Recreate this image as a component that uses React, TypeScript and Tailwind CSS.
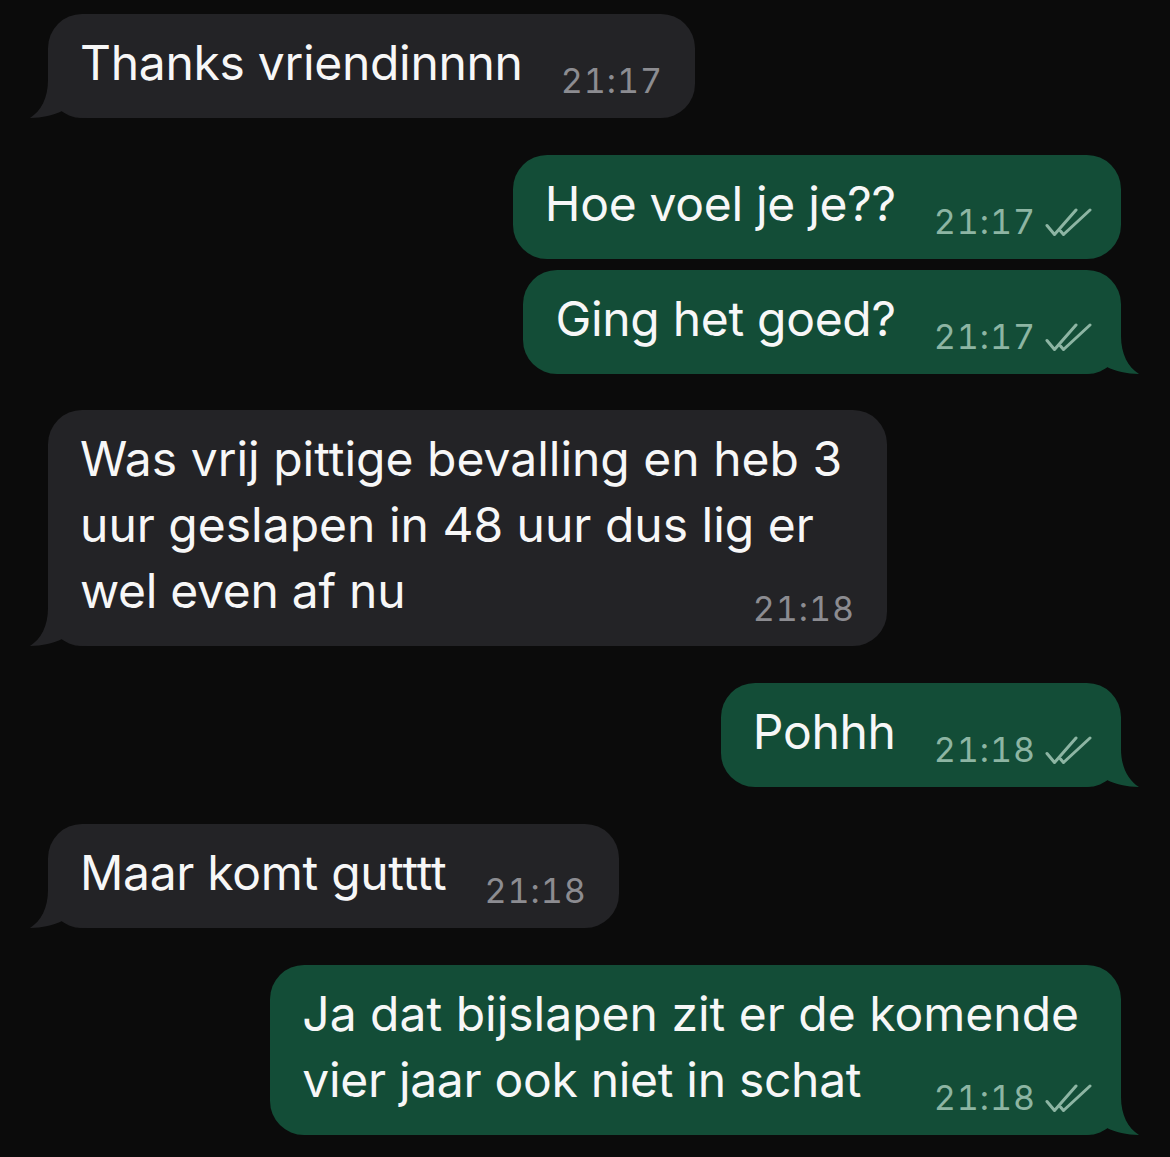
import React from "react";

type Msg = {
  id: number;
  out: boolean;
  lines: string[];
  time: string;
  tail: boolean;
  gap: string;
};

const messages: Msg[] = [
  { id: 1, out: false, lines: ["Thanks vriendinnnn"], time: "21:17", tail: true, gap: "mt-0" },
  { id: 2, out: true, lines: ["Hoe voel je je??"], time: "21:17", tail: false, gap: "mt-[37px]" },
  { id: 3, out: true, lines: ["Ging het goed?"], time: "21:17", tail: true, gap: "mt-[11px]" },
  {
    id: 4,
    out: false,
    lines: ["Was vrij pittige bevalling en heb 3", "uur geslapen in 48 uur dus lig er", "wel even af nu"],
    time: "21:18",
    tail: true,
    gap: "mt-[36px]",
  },
  { id: 5, out: true, lines: ["Pohhh"], time: "21:18", tail: true, gap: "mt-[37px]" },
  { id: 6, out: false, lines: ["Maar komt gutttt"], time: "21:18", tail: true, gap: "mt-[37px]" },
  {
    id: 7,
    out: true,
    lines: ["Ja dat bijslapen zit er de komende", "vier jaar ook niet in schat"],
    time: "21:18",
    tail: true,
    gap: "mt-[37px]",
  },
];

function DoubleCheck() {
  return (
    <svg width="47" height="30" viewBox="0 0 47 30" fill="none" className="ml-[9px] mb-[1px]">
      <path
        d="M2 17.5 L9.5 26.5 L31 2"
        stroke="#8db5a3"
        strokeWidth="3"
        strokeLinecap="round"
        strokeLinejoin="round"
      />
      <path
        d="M15.5 23 L18.5 26.5 L45 2"
        stroke="#8db5a3"
        strokeWidth="3"
        strokeLinecap="round"
        strokeLinejoin="round"
      />
    </svg>
  );
}

function Tail({ out }: { out: boolean }) {
  const fill = out ? "#134d37" : "#232326";
  return (
    <svg
      width="58"
      height="52"
      viewBox="0 0 58 52"
      className={`absolute bottom-0 ${out ? "right-[-18px] -scale-x-100" : "left-[-18px]"}`}
    >
      <path
        d="M18 0 L18 14 C18 32 11 45 0 52 C12 52 24 49 32 45 C38 49 46 52 58 52 L58 0 Z"
        fill={fill}
      />
    </svg>
  );
}

function Bubble({ m }: { m: Msg }) {
  const last = m.lines.length - 1;
  return (
    <div className={`flex ${m.out ? "justify-end" : "justify-start"} ${m.gap}`}>
      <div
        className={`relative rounded-[34px] pl-[32px] pt-[16px] pb-[22px] ${
          m.out ? "bg-[#134d37] pr-[29px]" : "bg-[#232326] pr-[32px]"
        }`}
      >
        {m.tail && <Tail out={m.out} />}
        <div className="relative flex flex-col text-[48px] leading-[66px] text-[#f7f7f7]">
          {m.lines.map((line, i) =>
            i === last ? (
              <div key={i} className="flex items-end justify-between">
                <span className="whitespace-nowrap tracking-[-0.3px]">{line}</span>
                <div
                  className={`flex items-end ml-[38px] mb-[-2px] text-[34px] leading-none whitespace-nowrap tabular-nums tracking-[1px] ${
                    m.out ? "text-[#8db5a3]" : "text-[#8c8c91]"
                  }`}
                >
                  <span>{m.time}</span>
                  {m.out && <DoubleCheck />}
                </div>
              </div>
            ) : (
              <span key={i} className="whitespace-nowrap pr-[13px]">
                {line}
              </span>
            )
          )}
        </div>
      </div>
    </div>
  );
}

export default function App() {
  return (
    <div
      className="min-h-[1157px] w-[1170px] bg-[#0b0b0b] pl-[48px] pr-[49px] pt-[14px] overflow-hidden"
      style={{ fontFamily: "Inter, 'Noto Sans', sans-serif" }}
    >
      {messages.map((m) => (
        <Bubble key={m.id} m={m} />
      ))}
    </div>
  );
}
